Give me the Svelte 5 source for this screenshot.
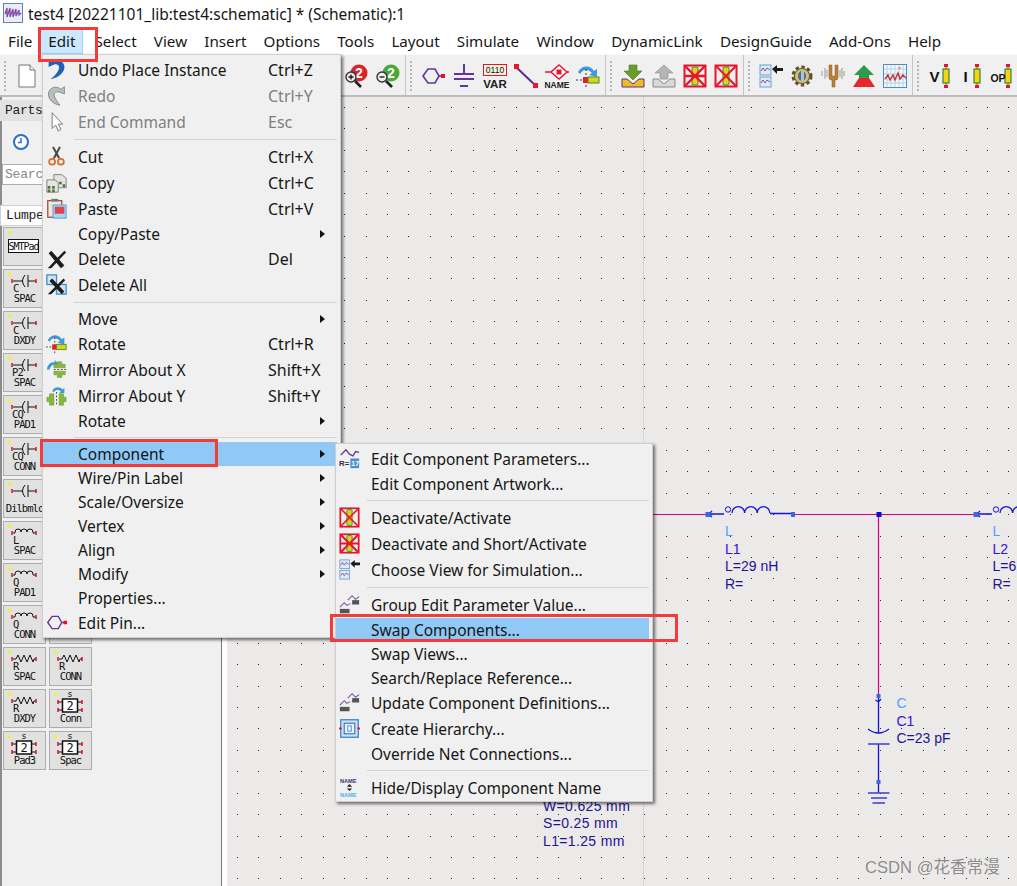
<script>
  // Menu bar
  const menus = ['File', 'Edit', 'Select', 'View', 'Insert', 'Options', 'Tools', 'Layout', 'Simulate', 'Window', 'DynamicLink', 'DesignGuide', 'Add-Ons', 'Help'];

  // Edit menu, tall rows have an icon
  const editItems = [
    { label: 'Undo Place Instance', key: 'Ctrl+Z', icon: 'undo' },
    { label: 'Redo', key: 'Ctrl+Y', icon: 'redo', off: true },
    { label: 'End Command', key: 'Esc', icon: 'cursor', off: true },
    { sep: true },
    { label: 'Cut', key: 'Ctrl+X', icon: 'cut' },
    { label: 'Copy', key: 'Ctrl+C', icon: 'copy' },
    { label: 'Paste', key: 'Ctrl+V', icon: 'paste' },
    { label: 'Copy/Paste', more: true },
    { label: 'Delete', key: 'Del', icon: 'del' },
    { label: 'Delete All', icon: 'delall' },
    { sep: true },
    { label: 'Move', more: true },
    { label: 'Rotate', key: 'Ctrl+R', icon: 'rotate' },
    { label: 'Mirror About X', key: 'Shift+X', icon: 'mirrorx' },
    { label: 'Mirror About Y', key: 'Shift+Y', icon: 'mirrory' },
    { label: 'Rotate', more: true },
    { sep: true },
    { label: 'Component', more: true, active: true },
    { label: 'Wire/Pin Label', more: true },
    { label: 'Scale/Oversize', more: true },
    { label: 'Vertex', more: true },
    { label: 'Align', more: true },
    { label: 'Modify', more: true },
    { label: 'Properties...' },
    { label: 'Edit Pin...', icon: 'pin' }
  ];

  const componentItems = [
    { label: 'Edit Component Parameters...', icon: 'params' },
    { label: 'Edit Component Artwork...' },
    { sep: true },
    { label: 'Deactivate/Activate', icon: 'deact' },
    { label: 'Deactivate and Short/Activate', icon: 'short' },
    { label: 'Choose View for Simulation...', icon: 'view' },
    { sep: true },
    { label: 'Group Edit Parameter Value...', icon: 'group' },
    { label: 'Swap Components...', active: true },
    { label: 'Swap Views...' },
    { label: 'Search/Replace Reference...' },
    { label: 'Update Component Definitions...', icon: 'group' },
    { label: 'Create Hierarchy...', icon: 'hier' },
    { label: 'Override Net Connections...' },
    { sep: true },
    { label: 'Hide/Display Component Name', icon: 'name' }
  ];

  // Toolbar groups
  const toolGroups = [
    ['pin', 'ground', 'var', 'wire', 'nameTool', 'rotate'],
    ['down', 'up', 'short', 'deact'],
    ['view', 'gear', 'tune', 'arrowUp', 'graph'],
    ['probeV', 'probeI', 'probeOp']
  ];

  // Palette, two columns
  const palette = [
    { sym: 'text', text: 'SMTPad' }, {},
    { sym: 'cap', letter: 'C', label: 'SPAC' }, {},
    { sym: 'cap', letter: 'C', label: 'DXDY' }, {},
    { sym: 'cap', letter: 'P2', label: 'SPAC' }, {},
    { sym: 'cap', letter: 'CQ', label: 'PAD1' }, {},
    { sym: 'cap', letter: 'CQ', label: 'CONN' }, {},
    { sym: 'cap', letter: '', label: 'Dilbmlc' }, {},
    { sym: 'ind', letter: 'L', label: 'SPAC' }, {},
    { sym: 'ind', letter: 'Q', label: 'PAD1' }, {},
    { sym: 'ind', letter: 'Q', label: 'CONN' }, {},
    { sym: 'res', letter: 'R', label: 'SPAC' }, { sym: 'res', letter: 'R', label: 'CONN' },
    { sym: 'res', letter: 'R', label: 'DXDY' }, { sym: 'two', label: 'Conn' },
    { sym: 'two', label: 'Pad3' }, { sym: 'two', label: 'Spac' }
  ];

  // Grid dots of the schematic
  const dots = [];
  for (let i = 0; i < 37; i++) {
    for (let j = 0; j < 37; j++) {
      dots.push([Math.round(237 + i * 21.43), Math.round(107 + j * 21.43)]);
    }
  }
</script>

{#snippet icon(name)}
  <svg class="ico" viewBox="0 0 24 24" width="24" height="24">
    {#if name === 'undo'}
      <path d="M3 1 L3 9 L10 6 C15 6 16 9 14 13 C12 17 9 20 5 23 C14 22 22 15 21 8 C20 2 12 -1 7 3 Z" fill="#1f62b5"/>
    {:else if name === 'redo'}
      <path d="M21 2 L21 10 L15 8 C10 7 8 10 10 14 C12 18 14 21 16 23 C8 22 2 16 3 9 C4 3 12 0 17 5 Z" fill="#b9c0b9" stroke="#7c8480"/>
    {:else if name === 'cursor'}
      <path d="M7 2 L7 20 L11 16 L14 23 L17 21 L14 15 L19 15 Z" fill="#fff" stroke="#6c6c6c"/>
    {:else if name === 'cut'}
      <path d="M8 1 L15 14 M16 1 L9 14" stroke="#4a4a4a" stroke-width="2.4"/>
      <circle cx="7" cy="18" r="3.4" fill="none" stroke="#d9702a" stroke-width="2"/>
      <circle cx="17" cy="18" r="3.4" fill="none" stroke="#d9702a" stroke-width="2"/>
    {:else if name === 'copy'}
      <path d="M9 3 H18 L23 7 V18 H9 Z" fill="#e4e4e0" stroke="#777"/>
      <path d="M1 9 H10 L14 12 V23 H1 Z" fill="#e4e4e0" stroke="#777"/>
      <path d="M2 16 h3 v3 h-3 z M7 16 h3 v3 h-3 z M2 20 h3 v3 h-3 z M7 20 h3 v3 h-3 z M15 11 h3 v3 h-3 z M19 14 h3 v3 h-3 z" fill="#56703a"/>
    {:else if name === 'paste'}
      <rect x="2" y="3" width="16" height="19" fill="#f0e6dc" stroke="#9a5a3a" stroke-width="1.5"/>
      <rect x="6" y="1" width="8" height="3" fill="#777"/>
      <rect x="8" y="8" width="15" height="15" fill="#a8d4f2" stroke="#4a9ad8"/>
      <path d="M10 10 h11 v8 h-11 z" fill="#d8484a"/>
    {:else if name === 'del'}
      <path d="M2 23 L21 3 L23 5 L6 23 Z M3 6 L6 3 L21 20 L17 23 Z" fill="#1c1c1c"/>
    {:else if name === 'delall'}
      <rect x="1" y="1" width="11" height="11" fill="#cfe4f5" stroke="#3f8fd0" stroke-width="1.5"/>
      <rect x="12" y="12" width="11" height="11" fill="#cfe4f5" stroke="#3f8fd0" stroke-width="1.5"/>
      <path d="M2 23 L20 5 L22 7 L6 23 Z M4 8 L7 5 L21 20 L18 23 Z" fill="#1c1c1c"/>
    {:else if name === 'rotate'}
      <path d="M2 8 C6 1 14 1 18 7 L21 5 L21 13 L13 11 L16 9 C12 5 7 5 4 10 Z" fill="#3d9ad6"/>
      <path d="M0 16 H6 M10 5 V23" stroke="#333" stroke-dasharray="2 2"/>
      <rect x="7" y="13" width="5" height="6" fill="#e02030"/>
      <rect x="12" y="13" width="11" height="6" fill="#dcd020" stroke="#4c8c20"/>
    {:else if name === 'mirrorx'}
      <path d="M1 12 C2 6 6 3 10 4 L10 1 L14 5 L10 8 L10 6 C7 6 5 9 4 12 Z" fill="#3d9ad6"/>
      <path d="M9 12 H23" stroke="#333" stroke-dasharray="2 2"/>
      <path d="M13 3 h5 v3 h4 v4 h-13 v-4 h4 Z M9 14 h13 v4 h-4 v3 h-5 v-3 h-4 Z" fill="#86b83c" stroke="#5c8c2c" stroke-width=".5"/>
    {:else if name === 'mirrory'}
      <path d="M7 7 C9 2 15 1 19 5 L21 3 L21 9 L15 9 L17 7 C14 5 11 5 9 8 Z" fill="#3d9ad6"/>
      <path d="M12 8 V24" stroke="#333" stroke-dasharray="2 2"/>
      <path d="M4 10 h5 v13 h-5 v-4 h-3 v-5 h3 Z M15 10 h5 v4 h3 v5 h-3 v4 h-5 Z" fill="#86b83c" stroke="#5c8c2c" stroke-width=".5"/>
    {:else if name === 'pin'}
      <path d="M2 12 L7 5 H14 L18 12 L14 19 H7 Z" fill="none" stroke="#65359a" stroke-width="1.6"/>
      <path d="M18 12 H21" stroke="#65359a" stroke-width="1.6"/>
      <rect x="20" y="10" width="4" height="4" fill="#e01030"/>
    {:else if name === 'params'}
      <path d="M2 8 L8 2 L12 7 L16 9 L19 4 L23 5" fill="none" stroke="#5f3d96" stroke-width="1.5"/>
      <text x="0" y="21" class="ic-t">R=</text>
      <rect x="13" y="12" width="10" height="11" fill="#4a90d0"/>
      <text x="14" y="21" class="ic-w">17</text>
    {:else if name === 'deact'}
      <rect x="1.5" y="1.5" width="21" height="21" fill="#f3eeee" stroke="#e8142c" stroke-width="2"/>
      <rect x="9" y="3" width="6" height="18" rx="1" fill="#e0d020" stroke="#2c8c2c"/>
      <path d="M2 2 L22 22 M22 2 L2 22" stroke="#e8142c" stroke-width="2"/>
    {:else if name === 'short'}
      <rect x="1.5" y="1.5" width="21" height="21" fill="#f3eeee" stroke="#e8142c" stroke-width="2"/>
      <rect x="9" y="3" width="6" height="18" rx="1" fill="#e0d020" stroke="#2c8c2c"/>
      <path d="M2 2 L22 22 M22 2 L2 22 M1 12 H23" stroke="#e8142c" stroke-width="2.4"/>
    {:else if name === 'view'}
      <rect x="1" y="1" width="11" height="10" fill="#dfeaf5" stroke="#6aa0d0"/>
      <rect x="1" y="13" width="11" height="10" fill="#dfeaf5" stroke="#6aa0d0"/>
      <path d="M2 7 L4 4 L6 7 L8 4 L11 6 M2 19 L4 16 L6 19 L8 16 L11 18" fill="none" stroke="#7a52a8"/>
      <path d="M13 5 L18 1 V4 H24 V7 H18 V10 Z" fill="#1a1a1a"/>
    {:else if name === 'group'}
      <path d="M10 7 L15 2 L19 6 L23 3" fill="none" stroke="#7a52a8" stroke-width="1.2"/>
      <path d="M1 15 L6 10 L9 13 L13 11" fill="none" stroke="#7a52a8" stroke-width="1.2"/>
      <rect x="15" y="7" width="8" height="5" fill="#555"/>
      <rect x="1" y="17" width="11" height="5" fill="#555"/>
    {:else if name === 'hier'}
      <rect x="2" y="2" width="20" height="20" fill="#cfe2f3" stroke="#3f86c8" stroke-width="1.5"/>
      <rect x="6" y="6" width="12" height="12" fill="#eef4fa" stroke="#3f86c8" stroke-width="1.5"/>
      <rect x="10" y="9" width="4" height="6" fill="none" stroke="#3f86c8"/>
      <circle cx="1.5" cy="12" r="1.5" fill="#e01030"/><circle cx="22.5" cy="12" r="1.5" fill="#e01030"/>
    {:else if name === 'name'}
      <text x="1" y="7" class="ic-n">NAME</text>
      <path d="M12 8 L15 11 H9 Z M12 16 L15 13 H9 Z" fill="#222"/>
      <text x="1" y="23" class="ic-n sky">NAME</text>
    {:else if name === 'ground'}
      <path d="M12 0 V10 M2 10 H22 M2 15 H22 M8 22 H16" stroke="#65359a" stroke-width="2" fill="none"/>
    {:else if name === 'var'}
      <rect x="0.5" y="0.5" width="23" height="11" fill="#f8f2dc" stroke="#e8142c"/>
      <text x="12" y="9" class="ic-b">0110</text>
      <text x="12" y="24" class="ic-v">VAR</text>
    {:else if name === 'wire'}
      <path d="M2 3 L22 22" stroke="#5a2d91" stroke-width="2"/>
      <rect x="0" y="0" width="5" height="5" fill="#e8142c"/><rect x="19" y="19" width="5" height="5" fill="#e8142c"/>
    {:else if name === 'nameTool'}
      <path d="M0 8 H8 M19 8 H24" stroke="#e8142c" stroke-width="1.5"/>
      <path d="M14 1 L22 8 L14 15 L6 8 Z" fill="#fff" stroke="#e8142c" stroke-width="1.5"/>
      <rect x="11.5" y="5.5" width="5" height="5" fill="#e8142c"/>
      <text x="12" y="24" class="ic-v small">NAME</text>
    {:else if name === 'down'}
      <path d="M8 1 H16 V7 H21 L12 16 L3 7 H8 Z" fill="#6a9a30" stroke="#4a7a20" stroke-width=".6"/>
      <path d="M1 15 H6 L12 20 L18 15 H23 V23 H1 Z" fill="#eebc20" stroke="#5c2d91"/>
    {:else if name === 'up'}
      <path d="M12 1 L21 9 H16 V15 H8 V9 H3 Z" fill="#b4b4b4" stroke="#8a8a8a" stroke-width=".6"/>
      <path d="M1 15 H6 L12 20 L18 15 H23 V23 H1 Z" fill="#d8d8d8" stroke="#8a8a8a"/>
    {:else if name === 'gear'}
      <circle cx="12" cy="12" r="8.5" fill="#c9b878" stroke="#5c5436" stroke-width="4" stroke-dasharray="3.2 2.4"/>
      <circle cx="12" cy="12" r="7.5" fill="#cfbe80" stroke="#6a6040"/>
      <ellipse cx="12" cy="12" rx="4" ry="5" fill="#5a6a80"/>
      <rect x="11" y="7" width="3" height="10" fill="#a8c0d8"/>
    {:else if name === 'tune'}
      <path d="M8 1 V14 Q8 16 11 16 V23 H14 V16 Q17 16 17 14 V1 H14 V12 H11 V1 Z" fill="#b8803c" stroke="#8a5c24" stroke-width=".5"/>
      <path d="M1 7 V12 M4 4 V15 M6 6 V13 M19 6 V13 M21 4 V15 M23 7 V12" stroke="#999"/>
    {:else if name === 'arrowUp'}
      <path d="M12 1 L22 11 H17 V14 H7 V11 H2 Z" fill="#2c9c4c"/>
      <path d="M7 14 H17 L23 23 H1 Z" fill="#e8242c"/>
    {:else if name === 'graph'}
      <rect x="0.5" y="0.5" width="23" height="23" fill="#f4f8fc" stroke="#4a90c8"/>
      <path d="M4 1 V23 M8 1 V23 M12 1 V23 M16 1 V23 M20 1 V23 M1 5 H23 M1 10 H23 M1 15 H23 M1 19 H23" stroke="#9cc4e4" stroke-width=".7"/>
      <path d="M2 15 L5 11 L7 16 L10 11 L12 16 L15 9 L17 15 L20 11 L23 14" fill="none" stroke="#c03038" stroke-width="1.4"/>
      <path d="M15 3 h3 l-1.5 3 z" fill="#e89a20"/>
    {:else if name === 'probeV' || name === 'probeI' || name === 'probeOp'}
      <rect x="16" y="0" width="4" height="3" fill="#e8142c"/><rect x="16" y="21" width="4" height="3" fill="#e8142c"/>
      <path d="M18 3 V21" stroke="#2c7c2c"/>
      <rect x="15" y="5" width="6" height="14" fill="#f0d810" stroke="#1c6c2c"/>
      <text x={name === 'probeOp' ? 8 : 6.5} y="17.5" class="ic-p" class:small={name === 'probeOp'}>{name === 'probeV' ? 'V' : name === 'probeI' ? 'I' : 'OP'}</text>
    {/if}
  </svg>
{/snippet}

{#snippet menuRows(items)}
  {#each items as item}
    {#if item.sep}
      <div class="sep"></div>
    {:else}
      <div class="row" class:tall={item.icon} class:off={item.off} class:active={item.active}>
        <span class="slot">{#if item.icon}{@render icon(item.icon)}{/if}</span>
        <span class="label">{item.label}</span>
        {#if item.key}<span class="key">{item.key}</span>{/if}
        {#if item.more}<span class="more"></span>{/if}
      </div>
    {/if}
  {/each}
{/snippet}

{#snippet symbol(p)}
  <svg class="sym" viewBox="0 0 41 37" width="41" height="37">
    {#if p.sym === 'cap'}
      <path d="M9 11 H19 M21 5 Q16 11 21 17 M24 5 V17 M24 11 H32" fill="none" stroke="#111"/>
      <path d="M8 9 V13 M32 9 V13" stroke="#e01020" stroke-width="1.5"/>
    {:else if p.sym === 'ind'}
      <path d="M9 11 H11 V10 Q11 7 14 7 Q17 7 17 10 Q17 7 20 7 Q23 7 23 10 Q23 7 26 7 Q29 7 29 10 V11 H32" fill="none" stroke="#111"/>
      <path d="M8 9 V13 M32 9 V13" stroke="#e01020" stroke-width="1.5"/>
    {:else if p.sym === 'res'}
      <path d="M9 11 H12 L14 7 L17 14 L20 7 L23 14 L26 7 L29 14 L30 11 H32" fill="none" stroke="#111"/>
      <path d="M8 9 V13 M32 9 V13" stroke="#e01020" stroke-width="1.5"/>
    {:else if p.sym === 'two'}
      <text x="20" y="7" class="pal-s">s</text>
      <rect x="12.5" y="9" width="15" height="13" fill="#fff" stroke="#111" stroke-width="1.5"/>
      <text x="20" y="19.5" class="pal-n">2</text>
      <path d="M8 12 H12 M28 12 H32 M8 20 H12 M28 20 H32" stroke="#111"/>
      <path d="M8 10 V14 M32 10 V14 M8 18 V22 M32 18 V22" stroke="#e01020" stroke-width="1.5"/>
    {:else if p.sym === 'text'}
      <rect x="4.5" y="11.5" width="30" height="13" fill="#fff" stroke="#111"/>
      <text x="19.5" y="21.5" class="pal-t">{p.text}</text>
    {/if}
    {#if p.letter}<text x={p.letter.length > 1 ? 8 : 9} y="21.5" class="pal-l">{p.letter}</text>{/if}
  </svg>
{/snippet}

<div class="app">
  <div class="titlebar">
    <svg class="logo" viewBox="0 0 20 20" width="20" height="20">
      <rect x="0.5" y="0.5" width="19" height="19" fill="#e9eef6" stroke="#6a7fb0"/>
      <path d="M2 11 L4 5 V14 L7 5 V14 L10 6 V14 L13 6 V13 L16 7 V12 L18 10" fill="none" stroke="#8048a8" stroke-width="1.3"/>
    </svg>
    <span>test4 [20221101_lib:test4:schematic] * (Schematic):1</span>
  </div>

  <nav class="menubar">
    {#each menus as m}
      <span class="menu-title" class:open={m === 'Edit'}>{m}</span>
    {/each}
  </nav>

  <div class="toolbar">
    <div class="tgroup first">
      <span class="grip"></span>
      <svg class="doc" viewBox="0 0 18 24" width="18" height="24">
        <path d="M1 1 H12 L17 6 V23 H1 Z" fill="#fff" stroke="#777"/>
        <path d="M12 1 V6 H17" fill="#eee" stroke="#777"/>
      </svg>
      <span class="hidden-tools"></span>
      <svg class="ico" viewBox="0 0 24 24" width="24" height="24">
        <circle cx="14" cy="9" r="8.5" fill="#d8242c"/>
        <text x="14" y="14" class="ic-z">2</text>
        <circle cx="6" cy="13" r="5" fill="#eee" stroke="#333" stroke-width="1.4"/>
        <path d="M3.5 13 H8.5 M6 10.5 V15.5" stroke="#111" stroke-width="1.3"/>
        <path d="M10 17 L16 23" stroke="#222" stroke-width="2.6"/>
      </svg>
      <svg class="ico" viewBox="0 0 24 24" width="24" height="24">
        <circle cx="15" cy="9" r="8.5" fill="#48a838"/>
        <text x="15" y="14" class="ic-z">2</text>
        <circle cx="6" cy="13" r="5" fill="#eee" stroke="#333" stroke-width="1.4"/>
        <path d="M3.5 13 H8.5" stroke="#111" stroke-width="1.3"/>
        <path d="M10 17 L16 23" stroke="#222" stroke-width="2.6"/>
      </svg>
    </div>
    {#each toolGroups as group}
      <div class="tgroup">
        <span class="grip"></span>
        <div class="tools">
          {#each group as t}{@render icon(t)}{/each}
        </div>
      </div>
    {/each}
  </div>

  <div class="main">
    <aside class="parts">
      <div class="parts-title">Parts</div>
      <svg class="clock" viewBox="0 0 16 16" width="16" height="16">
        <circle cx="8" cy="8" r="7" fill="#fff" stroke="#2a6fc9" stroke-width="2"/>
        <path d="M8 4 V8.5 H5" fill="none" stroke="#2a6fc9" stroke-width="1.5"/>
      </svg>
      <div class="search"><span>Search</span></div>
      <div class="combo"><span>Lumped</span></div>
      <div class="palette">
        {#each palette as p}
          <div class="pal-btn">
            <i class="spot"></i>
            {@render symbol(p)}
            {#if p.label}<span class="pal-label">{p.label}</span>{/if}
          </div>
        {/each}
      </div>
    </aside>

    <div class="canvas">
      <svg class="sheet" viewBox="227 97 790 789" width="790" height="789">
        <path d="M643.5 97 V886" stroke="#d8d6d6"/>
        {#each dots as d}
          <rect x={d[0]} y={d[1]} width="1" height="1" fill="#222"/>
        {/each}

        <path d="M500 514.5 H708 M793 514.5 H976 M878.5 514.5 V696" stroke="#d4008a" stroke-width="1.2" fill="none"/>

        <!-- L1 -->
        <path d="M708 514 H724 M712 511 L709 514 L712 517 M770 513.5 H793" stroke="#1212dd" stroke-width="1.3" fill="none"/>
        <circle cx="728" cy="509.5" r="2.7" fill="none" stroke="#1212dd"/>
        <path d="M732 513 a6.3 6.3 0 0 1 12.6 0 a6.3 6.3 0 0 1 12.6 0 a6.3 6.3 0 0 1 12.6 0" fill="none" stroke="#1212dd" stroke-width="1.3"/>
        <rect x="705.5" y="512" width="5" height="5" fill="#3a68e0"/>
        <rect x="791" y="512" width="4" height="5" fill="#3a68e0"/>
        <rect x="876.5" y="512" width="5" height="5" fill="#0808d8"/>

        <!-- L2, runs off the sheet -->
        <path d="M976 514 H992 M980 511 L977 514 L980 517" stroke="#1212dd" stroke-width="1.3" fill="none"/>
        <circle cx="996" cy="509.5" r="2.7" fill="none" stroke="#1212dd"/>
        <path d="M1000 513 a6.3 6.3 0 0 1 12.6 0 a6.3 6.3 0 0 1 12.6 0" fill="none" stroke="#1212dd" stroke-width="1.3"/>
        <rect x="973.5" y="512" width="5" height="5" fill="#3a68e0"/>

        <!-- C1 and ground -->
        <path d="M878.5 696 V733 M875.5 700 L878.5 702 L881 699 M878.5 744 V793" stroke="#1212dd" stroke-width="1.3" fill="none"/>
        <path d="M868 729 Q878.5 737 889 729" fill="none" stroke="#1212dd" stroke-width="1.3"/>
        <path d="M868 744 H889.5 M868 793 H889.5 M871 798 H887 M872.5 803 H885" stroke="#3c3cd4" stroke-width="1.4"/>
        <rect x="876.5" y="694" width="4" height="4" fill="#3a68e0"/>
        <rect x="876.5" y="780" width="4" height="4" fill="#3a68e0"/>

        <text x="725" y="536" class="t-type">L</text>
        <text x="725" y="554" class="t-name">L1</text>
        <text x="725" y="571" class="t-val">L=29 nH</text>
        <text x="725" y="589" class="t-val">R=</text>
        <text x="992.5" y="536" class="t-type">L</text>
        <text x="992.5" y="554" class="t-name">L2</text>
        <text x="992.5" y="571" class="t-val">L=6</text>
        <text x="992.5" y="589" class="t-val">R=</text>
        <text x="896.5" y="708" class="t-type">C</text>
        <text x="896.5" y="726" class="t-name">C1</text>
        <text x="896.5" y="743" class="t-val">C=23 pF</text>
        <text x="543" y="811" class="t-val wide">W=0.625 mm</text>
        <text x="543" y="828" class="t-val wide">S=0.25 mm</text>
        <text x="543" y="846" class="t-val wide">L1=1.25 mm</text>
      </svg>
    </div>
  </div>

  <div class="menu edit-menu">{@render menuRows(editItems)}</div>
  <div class="menu comp-menu">{@render menuRows(componentItems)}</div>

  <i class="mark mark-edit"></i>
  <i class="mark mark-comp"></i>
  <i class="mark mark-swap"></i>

  <div class="watermark">CSDN @花香常漫</div>
</div>

<style>
  :global(body) {
    background: #fff;
  }

  .app {
    position: relative;
    width: 1017px;
    height: 886px;
    overflow: hidden;
    display: flex;
    flex-direction: column;
    font-family: "Noto Sans", "Open Sans", sans-serif;
    font-size: 15px;
    color: #161616;
    background: #fff;
  }

  .titlebar {
    height: 27px;
    padding: 4px 0 0 3px;
    box-sizing: border-box;
    display: flex;
    align-items: flex-start;
    gap: 5px;
    line-height: 20px;
    font-size: 15.5px;
  }

  .logo {
    flex: none;
    margin-top: -1px;
  }

  .menubar {
    height: 27px;
    display: flex;
    align-items: center;
    font-size: 15.2px;
  }

  .menu-title {
    padding: 0 7px;
    line-height: 24px;
    border: 1px solid transparent;
  }

  .menu-title.open {
    background: #cce8ff;
    border-color: #99d1ff;
    margin-right: 3px;
  }

  .menu-title.open ~ .menu-title {
    margin-right: 1.2px;
  }

  .toolbar {
    height: 43px;
    flex: none;
    box-sizing: border-box;
    display: flex;
    background: #f0f0f0;
    border-bottom: 2px solid #bcbcbc;
    border-top: 1px solid #fafafa;
  }

  .tgroup {
    display: flex;
    align-items: center;
    border-right: 1px solid #c4c4c4;
    padding-left: 4px;
    padding-right: 5px;
    padding-top: 2px;
    flex: none;
  }

  .tgroup:last-child {
    border-right: 0;
  }

  .tgroup.first {
    width: 406px;
    box-sizing: border-box;
    gap: 7px;
  }

  .grip {
    width: 2px;
    height: 30px;
    margin-right: 9px;
    background: repeating-linear-gradient(#b4b4b4 0 2px, transparent 2px 4px);
    flex: none;
  }

  .first .grip {
    margin-right: 5px;
  }

  .hidden-tools {
    flex: 1;
  }

  .tools {
    display: flex;
    gap: 7px;
  }

  .ico {
    display: block;
    flex: none;
    overflow: visible;
  }

  .main {
    flex: 1;
    display: flex;
    min-height: 0;
  }

  .parts {
    width: 222px;
    box-sizing: border-box;
    background: #f0f0f0;
    border-left: 2px solid #8c8c8c;
    border-right: 1px solid #777;
    margin-right: 5px;
    flex: none;
    display: flex;
    flex-direction: column;
    font-family: "Liberation Mono", monospace;
    font-size: 13px;
  }

  .parts-title {
    height: 21px;
    margin: 3px 0 0 -2px;
    padding-left: 5px;
    line-height: 21px;
    background: #e2e2e2;
    letter-spacing: -0.3px;
    color: #222;
  }

  .clock {
    margin: 13px 0 0 11px;
  }

  .search {
    margin: 14px 0 0 0;
    height: 21px;
    box-sizing: border-box;
    padding-left: 2px;
    line-height: 19px;
    background: #fff;
    border: 1px solid #adadad;
    color: #888;
    letter-spacing: -0.2px;
  }

  .combo {
    margin: 20px 0 0 -2px;
    height: 21px;
    box-sizing: border-box;
    padding-left: 5px;
    line-height: 19px;
    background: #fff;
    border: 1px solid #d0d0d0;
    letter-spacing: -0.3px;
    color: #222;
  }

  .palette {
    margin: 1px 0 0 1px;
    display: grid;
    grid-template-columns: 43px 43px;
    grid-auto-rows: 39px;
    column-gap: 3px;
    row-gap: 3px;
  }

  .pal-btn {
    position: relative;
    box-sizing: border-box;
    background: #e1e1e1;
    border: 1px solid #adadad;
    overflow: hidden;
  }

  .spot {
    position: absolute;
    left: 4px;
    top: 3px;
    width: 3px;
    height: 3px;
    background: #f8f020;
  }

  .sym {
    display: block;
  }

  .pal-label {
    position: absolute;
    left: 0;
    right: 0;
    top: 22px;
    text-align: center;
    font-size: 10.5px;
    line-height: 13px;
    letter-spacing: -1px;
    font-family: "DejaVu Sans Mono", monospace;
    color: #111;
  }

  .pal-l,
  .pal-s,
  .pal-n,
  .pal-t {
    font-family: "DejaVu Sans Mono", monospace;
    fill: #111;
  }

  .pal-l {
    font-size: 10.5px;
    letter-spacing: -0.8px;
  }

  .pal-s {
    font-size: 9px;
    text-anchor: middle;
  }

  .pal-n {
    font-size: 12px;
    text-anchor: middle;
  }

  .pal-t {
    font-size: 10px;
    text-anchor: middle;
    letter-spacing: -1px;
  }

  .canvas {
    flex: 1;
    background: #ece9e9;
    min-width: 0;
  }

  .sheet {
    display: block;
  }

  .t-type,
  .t-name,
  .t-val {
    font-family: "Liberation Sans", sans-serif;
    font-size: 14px;
  }

  .t-type {
    fill: #48a4fa;
  }

  .t-name {
    fill: #3014e0;
  }

  .t-val {
    fill: #1c1490;
  }

  .t-val.wide {
    letter-spacing: 0.35px;
  }

  .menu {
    position: absolute;
    box-sizing: border-box;
    background: #f0f0f0;
    border: 1px solid #cfcfcf;
    box-shadow: 2px 2px 3px rgba(0, 0, 0, 0.55);
    z-index: 2;
    font-size: 15.5px;
  }

  .edit-menu {
    left: 42px;
    top: 54px;
    width: 299px;
    height: 584px;
    padding-top: 2px;
  }

  .comp-menu {
    left: 335px;
    top: 443px;
    width: 318px;
    height: 359px;
    padding-top: 2px;
    z-index: 3;
  }

  .row {
    position: relative;
    height: 24px;
    box-sizing: border-box;
    padding-bottom: 1px;
    display: flex;
    align-items: center;
    margin-right: 3px;
    white-space: nowrap;
  }

  .row.tall {
    height: 26px;
  }

  .row.off {
    color: #7f7f7f;
  }

  .row.active {
    background: #90c8f6;
  }

  .slot {
    width: 35px;
    flex: none;
    display: flex;
    padding-left: 3px;
    box-sizing: border-box;
  }

  .slot .ico {
    width: 21px;
    height: 21px;
  }

  .label {
    width: 190px;
    flex: none;
  }

  .key {
    font-size: 16px;
  }

  .comp-menu .label {
    width: auto;
  }

  .more {
    position: absolute;
    right: 12px;
    top: 50%;
    margin-top: -4px;
    border-left: 5px solid #111;
    border-top: 4px solid transparent;
    border-bottom: 4px solid transparent;
  }

  .sep {
    height: 9px;
    margin-left: 31px;
    margin-right: 3px;
    box-sizing: border-box;
    border-top: 4px solid transparent;
    background: linear-gradient(#d4d4d4, #d4d4d4) 0 0 / 100% 1px no-repeat;
    background-origin: padding-box;
    background-clip: padding-box;
  }

  .mark {
    position: absolute;
    box-sizing: border-box;
    border: 3px solid #f23c3c;
    z-index: 4;
  }

  .mark-edit {
    left: 38px;
    top: 27px;
    width: 60px;
    height: 35px;
  }

  .mark-comp {
    left: 40px;
    top: 439px;
    width: 178px;
    height: 28px;
  }

  .mark-swap {
    left: 330px;
    top: 614px;
    width: 348px;
    height: 28px;
  }

  .watermark {
    position: absolute;
    left: 865px;
    top: 856px;
    font-family: "Liberation Sans", "Noto Sans CJK SC", sans-serif;
    font-size: 16.6px;
    line-height: 24px;
    color: #8a8a8a;
    text-shadow: 0 0 1px #fff;
    white-space: nowrap;
    z-index: 1;
  }

  /* small text inside the icons */
  .ic-t {
    font: bold 9px "Liberation Sans", sans-serif;
    fill: #333;
  }

  .ic-w {
    font: bold 8px "Liberation Sans", sans-serif;
    fill: #fff;
  }

  .ic-n {
    font: bold 6.5px "Liberation Sans", sans-serif;
    fill: #333a70;
  }

  .ic-n.sky {
    fill: #48b4ea;
  }

  .ic-b {
    font: 8.5px "Liberation Sans", sans-serif;
    text-anchor: middle;
    fill: #111;
  }

  .ic-v {
    font: bold 11.5px "Liberation Sans", sans-serif;
    text-anchor: middle;
    fill: #222;
  }

  .ic-v.small {
    font-size: 8.5px;
  }

  .ic-p {
    font: bold 15px "Liberation Sans", sans-serif;
    text-anchor: middle;
    fill: #111;
  }

  .ic-p.small {
    font-size: 10.5px;
  }

  .ic-z {
    font: bold 14px "Liberation Sans", sans-serif;
    text-anchor: middle;
    fill: #fff;
  }
</style>
